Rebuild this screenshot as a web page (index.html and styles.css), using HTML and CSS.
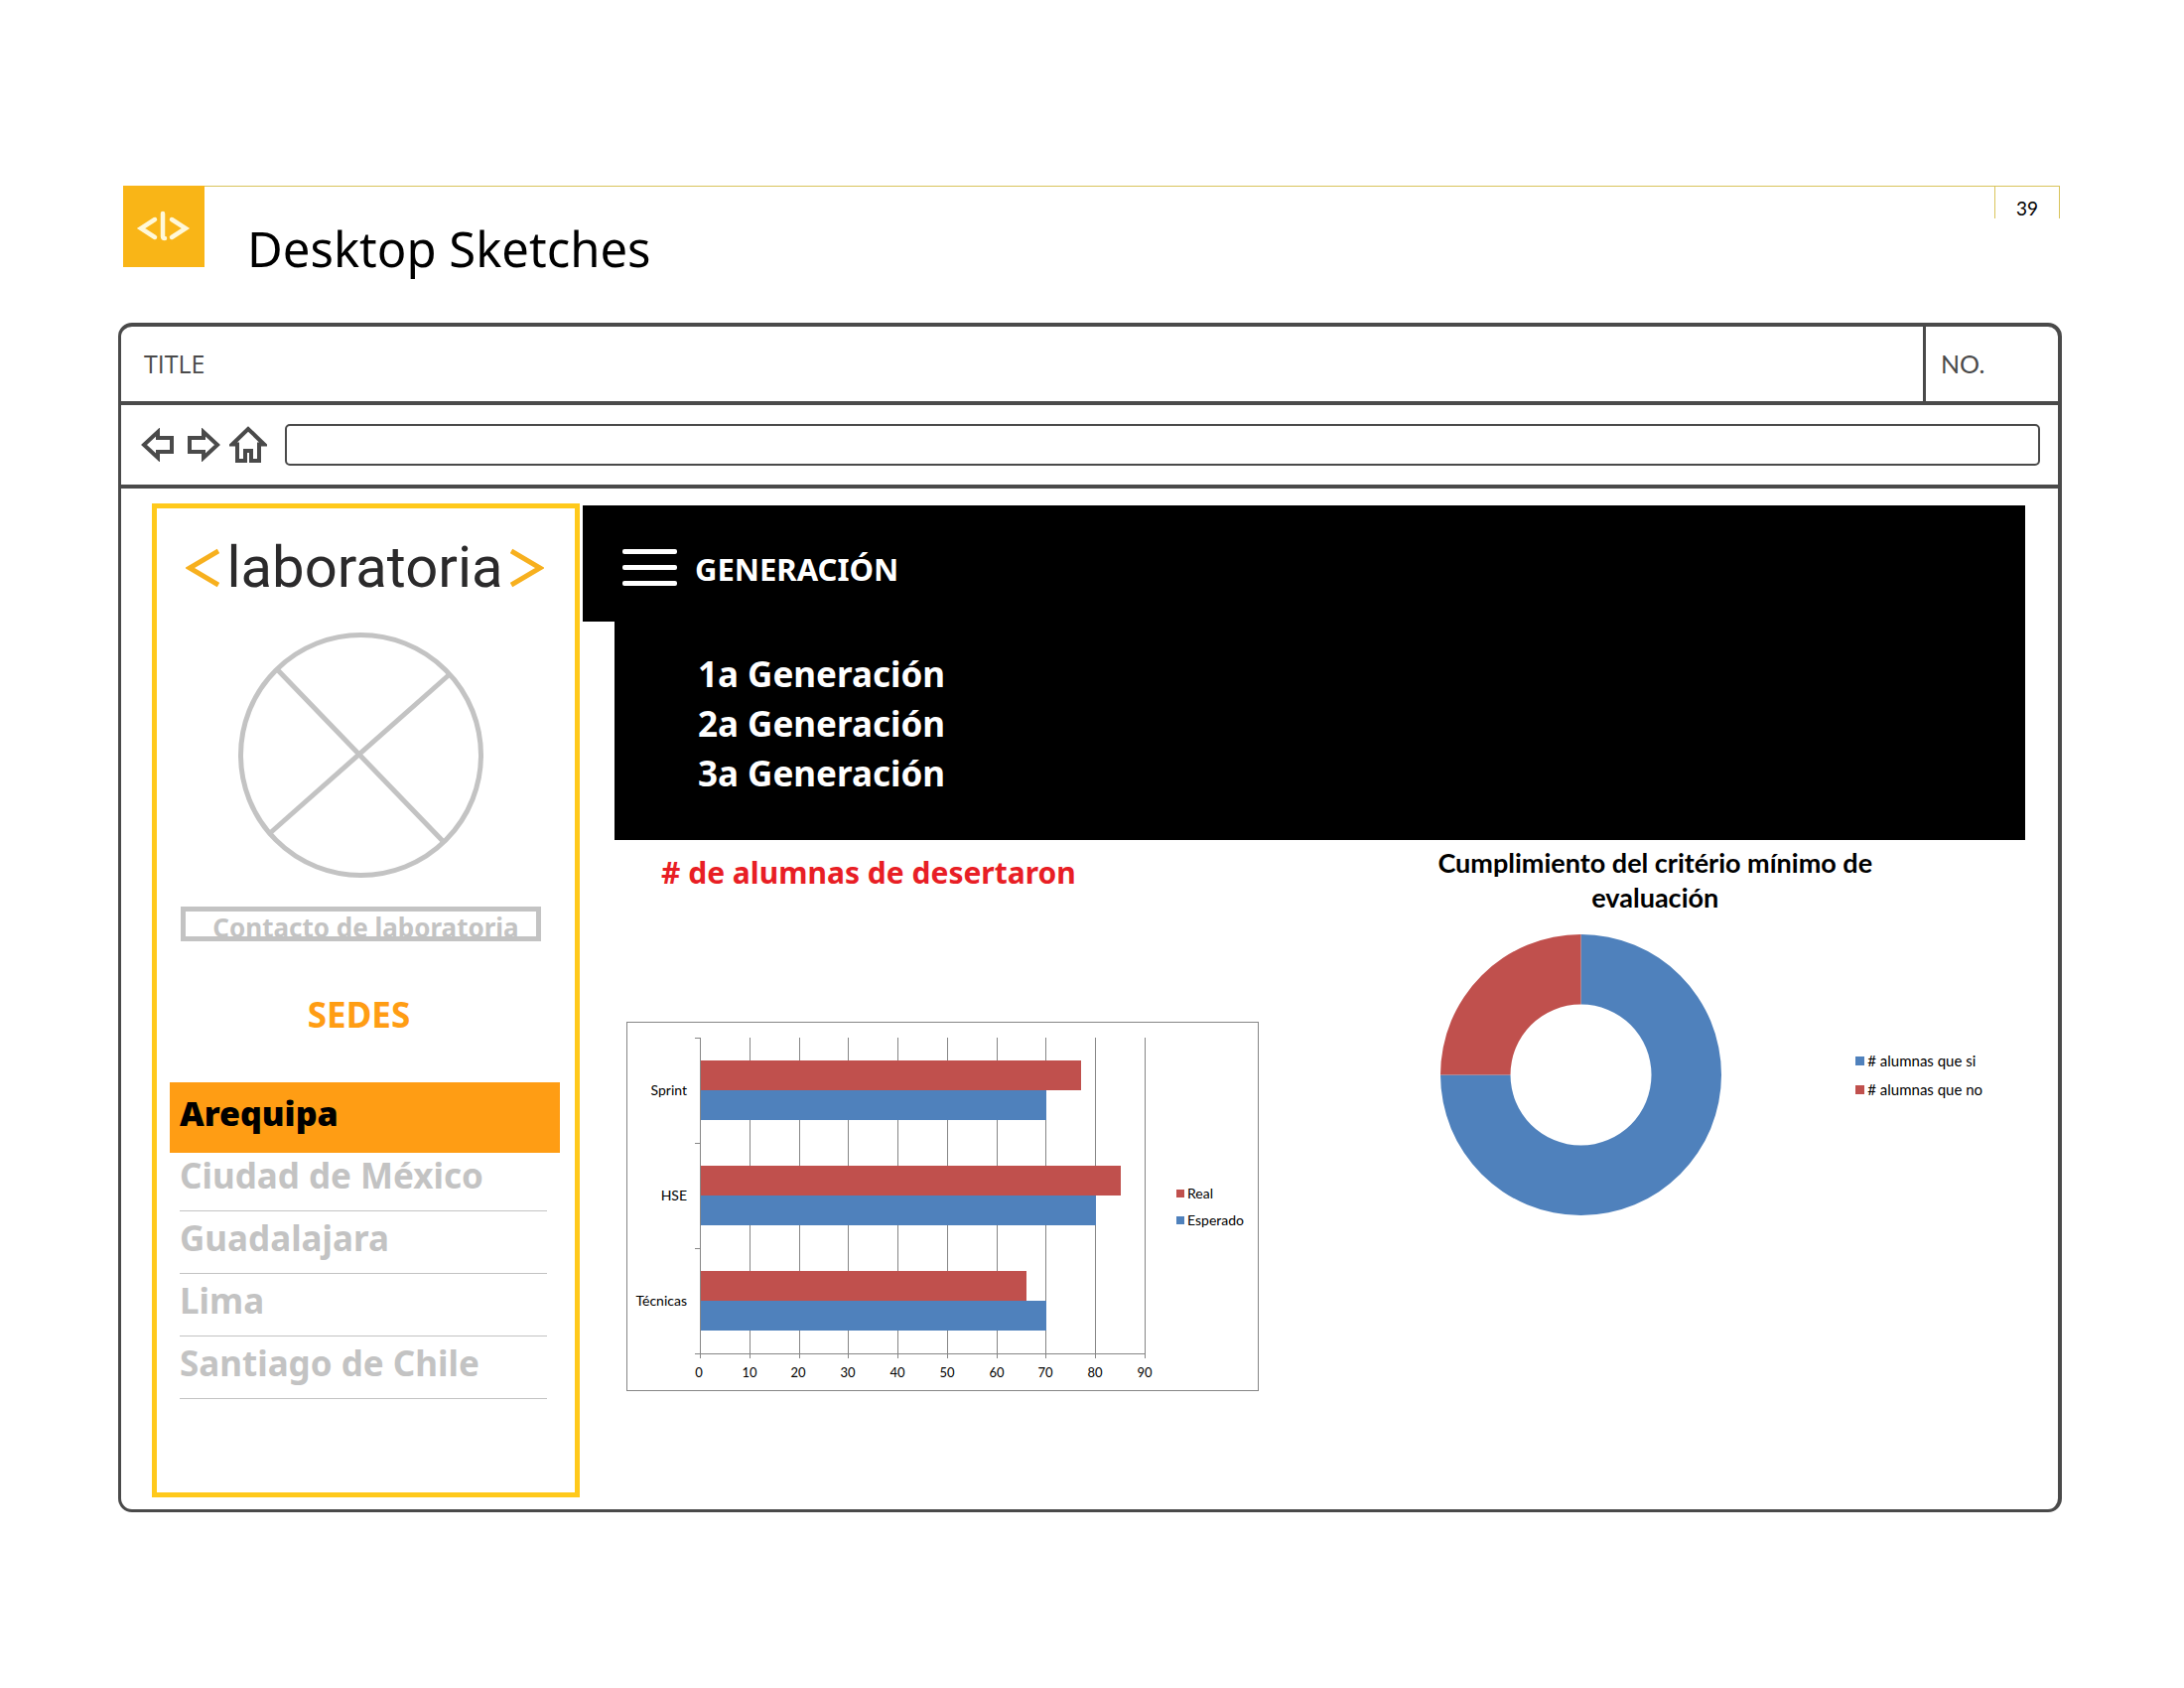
FILE: index.html
```html
<!DOCTYPE html>
<html lang="es">
<head>
<meta charset="utf-8">
<meta name="viewport" content="width=device-width, initial-scale=1">
<title>Desktop Sketches</title>
<link rel="stylesheet" href="styles.css">
</head>
<body>
<div class="page">
  <header class="sheet-header">
    <svg class="brand" viewBox="0 0 82 82" role="img" aria-label="Laboratoria">
      <rect width="82" height="82" fill="#f9b517"/>
      <path d="M32 34L18 43L32 52M40 28V51Q40 53 42 53M49 34L63 43L49 52" fill="none" stroke="#fff8d8" stroke-width="4.500" stroke-linecap="round"/>
    </svg>
    <h1 class="sheet-title">Desktop Sketches</h1>
    <span class="page-number">39</span>
  </header>

  <div class="browser">
    <div class="title-row">
      <span class="title-label">TITLE</span>
      <span class="number-label">NO.</span>
    </div>
    <div class="nav-row">
      <button class="icon-button" aria-label="Atrás">
        <svg width="34" height="34" viewBox="0 0 34 34"><path d="M3 17L17 4V10H31V24H17V30Z"/></svg>
      </button>
      <button class="icon-button" aria-label="Adelante">
        <svg width="34" height="34" viewBox="0 0 34 34"><path d="M31 17L17 4V10H3V24H17V30Z"/></svg>
      </button>
      <button class="icon-button home" aria-label="Inicio">
        <svg width="38" height="38" viewBox="0 0 38 38"><path d="M19 3L3 18.500H8V35H16V25H22V35H30V18.500H35Z"/></svg>
      </button>
      <input class="address" type="text" aria-label="Dirección">
    </div>

    <div class="workspace">
      <aside class="sidebar">
        <div class="logo">
          <svg width="34" height="70" viewBox="0 0 34 70"><path d="M33 23L4 40L33 57"/></svg>
          <span class="logo-name">laboratoria</span>
          <svg width="34" height="70" viewBox="0 0 34 70"><path d="M1 23L30 40L1 57"/></svg>
        </div>
        <div class="profile">
          <svg class="avatar" width="247" height="247" viewBox="0 0 247 247">
            <circle cx="123.500" cy="123.500" r="121"/>
            <path d="M39 37L206 210M213 42L32 202"/>
          </svg>
          <a class="contact" href="#contacto">Contacto de laboratoria</a>
          <h2 class="sites-title">SEDES</h2>
        </div>
        <ul class="sites">
          <li class="site active"><a href="#arequipa">Arequipa</a></li>
          <li class="site"><a href="#mexico">Ciudad de México</a></li>
          <li class="site"><a href="#guadalajara">Guadalajara</a></li>
          <li class="site"><a href="#lima">Lima</a></li>
          <li class="site"><a href="#santiago">Santiago de Chile</a></li>
        </ul>
      </aside>

      <main class="main">
        <div class="menu-bar">
          <button class="menu-button" aria-label="Menú"><span></span><span></span><span></span></button>
          <h2 class="menu-title">GENERACIÓN</h2>
        </div>
        <ul class="generations">
          <li><a href="#g1">1a Generación</a></li>
          <li><a href="#g2">2a Generación</a></li>
          <li><a href="#g3">3a Generación</a></li>
        </ul>

        <div class="charts">
          <section>
            <h3 class="dropout-title"># de alumnas de desertaron</h3>
            <figure class="bar-chart">
              <svg class="plot" width="540" height="370" viewBox="0 0 540 370">
                <path class="grid" d="M123.500 15V338M173.500 15V338M222.500 15V338M272.500 15V338M322.500 15V338M372.500 15V338M421.500 15V338M471.500 15V338M521.500 15V338"/>
                <g class="real">
                  <rect x="73" y="38" width="384" height="30"/>
                  <rect x="73" y="144" width="424" height="30"/>
                  <rect x="73" y="250" width="329" height="30"/>
                </g>
                <g class="expected">
                  <rect x="73" y="68" width="349" height="30"/>
                  <rect x="73" y="174" width="399" height="30"/>
                  <rect x="73" y="280" width="349" height="30"/>
                </g>
                <path class="grid" d="M73.500 15V338M68 15.500H73M68 121.500H73M68 227.500H73M68 333.500H521"/>
                <g class="category">
                  <text x="60" y="73">Sprint</text>
                  <text x="60" y="179">HSE</text>
                  <text x="60" y="285">Técnicas</text>
                </g>
                <g class="tick">
                  <text x="72" y="357">0</text>
                  <text x="123" y="357">10</text>
                  <text x="172" y="357">20</text>
                  <text x="222" y="357">30</text>
                  <text x="272" y="357">40</text>
                  <text x="322" y="357">50</text>
                  <text x="372" y="357">60</text>
                  <text x="421" y="357">70</text>
                  <text x="471" y="357">80</text>
                  <text x="521" y="357">90</text>
                </g>
              </svg>
              <ul class="legend">
                <li class="key-red">Real</li>
                <li class="key-blue">Esperado</li>
              </ul>
            </figure>
          </section>
          <section>
            <h3 class="criteria-title">Cumplimiento del critério mínimo de evaluación</h3>
            <figure class="donut-chart">
              <svg width="283" height="283" viewBox="-141.500 -141.500 283 283">
                <path class="expected" d="M0 -141.500A141.500 141.500 0 1 1 -141.500 0H-71A71 71 0 1 0 0 -71Z"/>
                <path class="real" d="M-141.500 0A141.500 141.500 0 0 1 0 -141.500V-71A71 71 0 0 0 -71 0Z"/>
              </svg>
              <ul class="legend legend-wide">
                <li class="key-blue"># alumnas que si</li>
                <li class="key-red"># alumnas que no</li>
              </ul>
            </figure>
          </section>
        </div>
      </main>
    </div>
  </div>
</div>
</body>
</html>
```
FILE: styles.css
```css
:root {
  --ink: #4a4a4a;
  --gray: #c3c3c3;
  --orange: #ff9d14;
  --red: #c0504d;
  --blue: #4f81bc;
}

* { box-sizing: border-box; }

body {
  margin: 0;
  background: #fff;
  color: #000;
  font-family: "Noto Sans", "Open Sans", sans-serif;
}

h1, h2, h3, ul, figure { margin: 0; padding: 0; }
ul { list-style: none; }
a { color: inherit; text-decoration: none; }
svg { display: block; flex: none; }
button { padding: 0; border: 0; background: none; cursor: pointer; }

.page { padding: 187px 123px 64px 119px; }

/* Sheet header */
.sheet-header {
  display: flex;
  align-items: flex-start;
  height: 138px;
  margin: 0 2px 0 5px;
}
.brand { width: 82px; height: 82px; }
.sheet-title {
  flex: 1;
  height: 34px;
  padding: 27px 0 0 43px;
  border-top: 1px solid #d9c45c;
  font-size: 49px;
  font-weight: 400;
  line-height: 70px;
}
.page-number {
  width: 66px;
  height: 33px;
  padding-top: 9px;
  border: 1px solid #d9c45c;
  border-bottom: 0;
  font: 19px/26px Lato, sans-serif;
  text-align: center;
}

/* Browser frame */
.browser {
  border: 4px solid var(--ink);
  border-left-width: 3px;
  border-bottom-width: 3px;
  border-radius: 14px;
}
.title-row {
  display: flex;
  height: 79px;
  border-bottom: 4px solid var(--ink);
  color: var(--ink);
  font: 400 25px/74px "Open Sans", sans-serif;
}
.title-label { flex: 1; padding-left: 23px; }
.number-label {
  width: 136px;
  padding-left: 15px;
  border-left: 3px solid var(--ink);
  font-family: Lato, sans-serif;
}
.nav-row {
  display: flex;
  align-items: center;
  gap: 12px;
  height: 84px;
  padding: 0 18px 0 20px;
  border-bottom: 4px solid var(--ink);
}
.icon-button path {
  fill: none;
  stroke: var(--ink);
  stroke-width: 4;
}
.home { margin: 0 6px 0 -3px; }
.address {
  flex: 1;
  height: 42px;
  border: 2px solid var(--ink);
  border-radius: 5px;
  background: #fff;
}
.workspace {
  display: grid;
  grid-template-columns: 431px 1fr;
  gap: 3px;
  padding: 15px 33px 12px 31px;
}

/* Sidebar */
.sidebar {
  padding: 20px 15px 94px 13px;
  border: 5px solid #ffc91b;
}
.logo {
  display: flex;
  justify-content: center;
  gap: 7px;
}
.logo path { fill: none; stroke: #f7b01e; stroke-width: 5; }
.logo-name {
  height: 70px;
  color: #2b2a2b;
  font: 58px/78px Roboto, sans-serif;
}
.profile {
  display: flex;
  flex-direction: column;
  align-items: center;
  padding: 35px 8px 0 0;
}
.avatar { fill: none; stroke: var(--gray); stroke-width: 5; }
.contact {
  width: 363px;
  height: 35px;
  margin-top: 29px;
  padding-left: 10px;
  border: 5px solid var(--gray);
  color: var(--gray);
  font-size: 26px;
  font-weight: 700;
  line-height: 32px;
  text-align: center;
}
.sites-title {
  margin: 50px 0 44px;
  padding-right: 4px;
  color: var(--orange);
  font-size: 35px;
  line-height: 48px;
}
.site {
  height: 63px;
  margin: 0 13px 0 10px;
  border-bottom: 1px solid var(--gray);
  color: var(--gray);
  font-size: 35px;
  font-weight: 700;
  line-height: 54px;
}
.site.active {
  height: 71px;
  margin: 0 0 -4px;
  padding-left: 10px;
  border: 0;
  background: var(--orange);
  color: #000;
  font-size: 34px;
  font-weight: 900;
  line-height: 62px;
}
.site a { display: block; }

/* Main column */
.main { padding-top: 2px; }
.menu-bar {
  display: flex;
  align-items: center;
  gap: 18px;
  height: 117px;
  padding: 0 40px;
  background: #000;
  color: #fff;
}
.menu-button {
  display: flex;
  flex-direction: column;
  gap: 11px;
  width: 55px;
  padding-top: 7px;
}
.menu-button span { height: 5px; border-radius: 2px; background: #fff; }
.menu-title { padding-top: 10px; font-size: 31px; line-height: 42px; }
.generations {
  height: 220px;
  margin-left: 32px;
  padding: 28px 0 0 84px;
  background: #000;
  color: #fff;
  font-size: 35px;
  font-weight: 700;
  line-height: 50px;
}
.charts { display: grid; grid-template-columns: 4fr 3fr; }
.dropout-title {
  padding: 8px 0 125px 79px;
  color: #e81e25;
  font-size: 30px;
  line-height: 50px;
}
.bar-chart {
  display: flex;
  align-items: center;
  gap: 13px;
  width: 637px;
  margin-left: 44px;
  border: 1px solid #868686;
}
.plot { font: 14px Lato, sans-serif; }
.grid { fill: none; stroke: #868686; }
.real { fill: var(--red); }
.expected { fill: var(--blue); }
.category { text-anchor: end; }
.tick { font-size: 13px; text-anchor: middle; }
.legend { font: 14px/27px Lato, sans-serif; }
.legend li { display: flex; align-items: center; gap: 3px; white-space: nowrap; }
.legend li::before { content: ""; width: 8px; height: 8px; background: var(--blue); }
.legend .key-red::before { background: var(--red); }
.legend-wide { font-size: 15px; line-height: 29px; }
.criteria-title {
  width: 500px;
  padding: 5px 20px 20px;
  font: 700 27px/35px Lato, sans-serif;
  text-align: center;
}
.donut-chart {
  display: flex;
  align-items: center;
  gap: 135px;
  padding-left: 34px;
}
.donut-chart .legend li::before { width: 9px; height: 9px; }
```
